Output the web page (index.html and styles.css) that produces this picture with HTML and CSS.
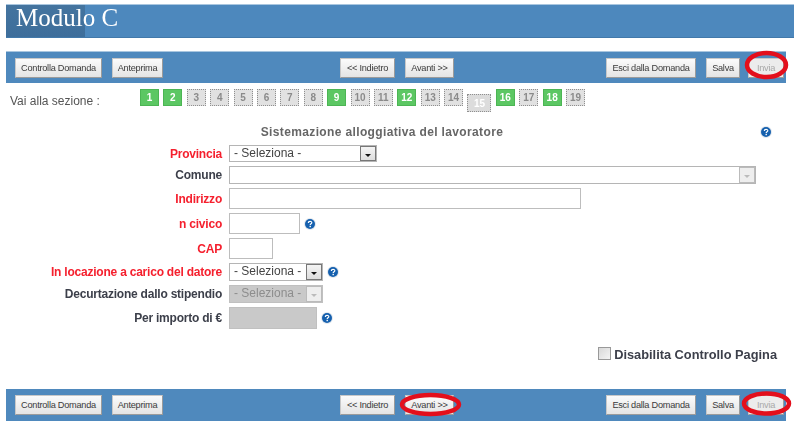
FILE: index.html
```html
<!DOCTYPE html>
<html lang="it">
<head>
<meta charset="utf-8">
<title>Modulo C</title>
<link rel="stylesheet" href="styles.css">
</head>
<body>
<div class="page">
  <header class="header">
    <div class="header-shade"></div>
    <h1 class="title">Modulo C</h1>
  </header>

  <div class="toolbar toolbar-top">
    <button class="btn b-controlla">Controlla Domanda</button>
    <button class="btn b-anteprima">Anteprima</button>
    <button class="btn b-indietro">&lt;&lt; Indietro</button>
    <button class="btn b-avanti">Avanti &gt;&gt;</button>
    <button class="btn b-esci">Esci dalla Domanda</button>
    <button class="btn b-salva">Salva</button>
    <button class="btn b-invia">Invia</button>
  </div>

  <nav class="sections">
    <span class="sections-label">Vai alla sezione :</span>
    <div class="tiles">
      <a class="tile done">1</a><a class="tile done">2</a><a class="tile">3</a><a class="tile">4</a><a class="tile">5</a><a class="tile">6</a><a class="tile">7</a><a class="tile">8</a><a class="tile done">9</a><a class="tile">10</a><a class="tile">11</a><a class="tile done">12</a><a class="tile">13</a><a class="tile">14</a><a class="tile current">15</a><a class="tile done">16</a><a class="tile">17</a><a class="tile done">18</a><a class="tile">19</a>
    </div>
  </nav>

  <div class="form-head">
    <h2 class="form-title">Sistemazione alloggiativa del lavoratore</h2>
    <svg class="help help-head" viewBox="0 0 12 12"><use href="#q"/></svg>
  </div>

  <form class="form">
    <label class="lab req r1">Provincia</label>
    <div class="field r1"><div class="sel w-prov"><span class="sel-text">- Seleziona -</span><span class="arrow dark"></span></div></div>

    <label class="lab r2">Comune</label>
    <div class="field r2"><div class="sel w-com"><span class="sel-text"></span><span class="arrow light"></span></div></div>

    <label class="lab req r3">Indirizzo</label>
    <div class="field r3"><div class="inp w-ind"></div></div>

    <label class="lab req r4">n civico</label>
    <div class="field r4"><div class="inp w-civ"></div><svg class="help" viewBox="0 0 12 12"><use href="#q"/></svg></div>

    <label class="lab req r5">CAP</label>
    <div class="field r5"><div class="inp w-cap"></div></div>

    <label class="lab req r6">In locazione a carico del datore</label>
    <div class="field r6"><div class="sel w-loc"><span class="sel-text">- Seleziona -</span><span class="arrow dark"></span></div><svg class="help" viewBox="0 0 12 12"><use href="#q"/></svg></div>

    <label class="lab r7">Decurtazione dallo stipendio</label>
    <div class="field r7"><div class="sel w-loc disabled"><span class="sel-text">- Seleziona -</span><span class="arrow light"></span></div></div>

    <label class="lab r8">Per importo di €</label>
    <div class="field r8"><div class="inp w-imp disabled"></div><svg class="help" viewBox="0 0 12 12"><use href="#q"/></svg></div>
  </form>

  <div class="disable-row">
    <span class="check"></span><span class="check-label">Disabilita Controllo Pagina</span>
  </div>

  <div class="toolbar toolbar-bottom">
    <button class="btn b-controlla">Controlla Domanda</button>
    <button class="btn b-anteprima">Anteprima</button>
    <button class="btn b-indietro">&lt;&lt; Indietro</button>
    <button class="btn b-avanti">Avanti &gt;&gt;</button>
    <button class="btn b-esci">Esci dalla Domanda</button>
    <button class="btn b-salva">Salva</button>
    <button class="btn b-invia">Invia</button>
  </div>

  <svg class="marks" viewBox="0 0 794 425" width="794" height="425">
    <ellipse cx="766.5" cy="65" rx="19.5" ry="12" />
    <ellipse cx="430.5" cy="404.5" rx="28.5" ry="9.5" />
    <ellipse cx="766.5" cy="403.5" rx="22.5" ry="10" />
  </svg>

  <svg class="defs" width="0" height="0">
    <defs>
      <g id="q">
        <circle cx="6" cy="6" r="6" fill="#e3e8ee"/>
        <circle cx="6" cy="6" r="5" fill="#1560ae"/>
        <path d="M4.3 4.9c0-2.1 3.5-2.1 3.5-.2 0 1.2-1.6 1.1-1.6 2.4" fill="none" stroke="#fff" stroke-width="1.2"/>
        <rect x="5.5" y="7.8" width="1.4" height="1.4" fill="#fff"/>
      </g>
    </defs>
  </svg>
</div>
</body>
</html>
```
FILE: styles.css
```css
* { box-sizing: border-box; }
html, body { margin: 0; padding: 0; background: #fff; }
body { font-family: "Liberation Sans", Arial, sans-serif; color: #3c3f4a; overflow: hidden; }
.page { position: relative; width: 794px; height: 425px; padding-top: 4px; filter: blur(0.35px); }

.header { position: relative; height: 34px; margin-left: 6px; background: #4d88bd; border-top: 1px solid #a9c6df; border-bottom: 1px solid #4279aa; }
.header-shade { position: absolute; left: 0; top: 0; bottom: 0; width: 79px; background: linear-gradient(#44749f, #3e6e9b); }
.title { position: relative; margin: 0; padding: 0 0 0 10px; font: 400 25px/26px "Liberation Serif", serif; color: #fff; }

.toolbar { display: flex; align-items: center; width: 780px; height: 32px; margin-left: 6px; background: #4f89bd; }
.toolbar-top { margin-top: 13px; border-top: 1px solid #a9c6df; }
.toolbar-bottom { position: absolute; left: 0; top: 389px; }
.btn { height: 20px; padding: 0; font: 400 9.2px/18px "Liberation Sans", sans-serif; letter-spacing: -0.25px; color: #3a3a3a; background: linear-gradient(#fbfbfb, #e4e4e4); border: 1px solid #c8c8c8; border-right-color: #9b9b9b; border-bottom-color: #9b9b9b; }
.b-controlla { width: 87px; margin-left: 9px; }
.b-anteprima { width: 51px; margin-left: 10px; }
.b-indietro { width: 55px; margin-left: 177px; }
.b-avanti { width: 49px; margin-left: 10px; }
.b-esci { width: 90px; margin-left: 152px; }
.b-salva { width: 34px; margin-left: 10px; }
.b-invia { width: 36px; margin-left: 8px; color: #a8a8a8; background: #ececec; }

.sections { display: flex; height: 29px; margin-top: 6px; }
.sections-label { width: 140px; padding: 5px 0 0 10px; font-size: 12px; line-height: 14px; color: #555; }
.tiles { display: flex; align-items: flex-start; gap: 4.4px; }
.tile { width: 19px; height: 17px; font: 700 10px/15px "Liberation Sans", sans-serif; text-align: center; color: #8a8a8a; background: #e1e1e1; border: 1px dotted #8f8f8f; }
.tile.done { color: #fff; background: #5cc763; border: 1px solid #4cb554; }
.tile.current { width: 24px; height: 18px; margin-top: 5px; color: #fff; background: #dcdcdc; line-height: 17px; }

.form-head { position: relative; height: 24px; margin-top: 5px; text-align: center; }
.form-title { margin: 0; padding: 1px 0 0 0; width: 764px; font: 700 12px/16px "Liberation Sans", sans-serif; letter-spacing: 0.36px; color: #666; }
.help { flex: none; width: 12px; height: 12px; margin-left: 4px; }
.help-head { position: absolute; left: 760px; top: 3px; margin: 0; }

.form { display: grid; grid-template-columns: 222px 1fr; column-gap: 7px; grid-template-rows: 17px 18px 21px 21px 21px 18px 18px 22px; row-gap: 4px; margin-top: -2px; margin-bottom: 0; }
.lab { display: flex; align-items: center; justify-content: flex-end; font-size: 12px; letter-spacing: -0.22px; font-weight: 700; color: #3c3f4a; white-space: nowrap; }
.lab.req { color: #f5202e; }
.field { display: flex; align-items: center; }
.sel { display: flex; height: 100%; align-items: stretch; background: #fff; border: 1px solid #b5b5b5; border-width: 1px 1.5px 1.5px 1px; }
.sel-text { flex: 1; padding-left: 4px; font-size: 12px; line-height: 15px; color: #444; white-space: nowrap; }
.arrow { position: relative; width: 16px; flex: none; background: #eee; border: 1px solid #bbb; }
.arrow::after { content: ""; position: absolute; left: 4px; top: 7px; border: 3.5px solid transparent; border-top-color: #bbb; border-bottom: 0; }
.arrow.dark { background: linear-gradient(#f4f4f4, #ddd); border-color: #777; }
.arrow.dark::after { border-top-color: #111; }
.w-prov { width: 148px; }
.w-com { width: 527px; }
.w-loc { width: 94px; }
.inp { height: 100%; background: #fff; border: 1px solid #bdbdbd; }
.w-ind { width: 352px; }
.w-civ { width: 71px; }
.w-cap { width: 44px; }
.w-imp { width: 88px; border-color: #999 #ddd #ddd #999; }
.disabled { background: #c9c9c9; border-color: #c0c0c0; }
.disabled .sel-text { color: #8d8d8d; }
.r1 { grid-row: 1; } .r2 { grid-row: 2; } .r3 { grid-row: 3; } .r4 { grid-row: 4; }
.r5 { grid-row: 5; } .r6 { grid-row: 6; } .r7 { grid-row: 7; } .r8 { grid-row: 8; }

.disable-row { display: flex; align-items: center; justify-content: flex-end; width: 777px; margin-top: 18px; height: 15px; }
.check { width: 13px; height: 13px; margin: 0 3px 3px 0; border: 1px solid #999; background: linear-gradient(135deg, #d8d8d8, #f4f4f4); }
.check-label { font-size: 12.8px; font-weight: 700; color: #3c3f4a; white-space: nowrap; }

.marks { position: absolute; left: 0; top: 0; pointer-events: none; fill: none; stroke: #e30f1c; stroke-width: 4.5; }
.defs { position: absolute; }
```
